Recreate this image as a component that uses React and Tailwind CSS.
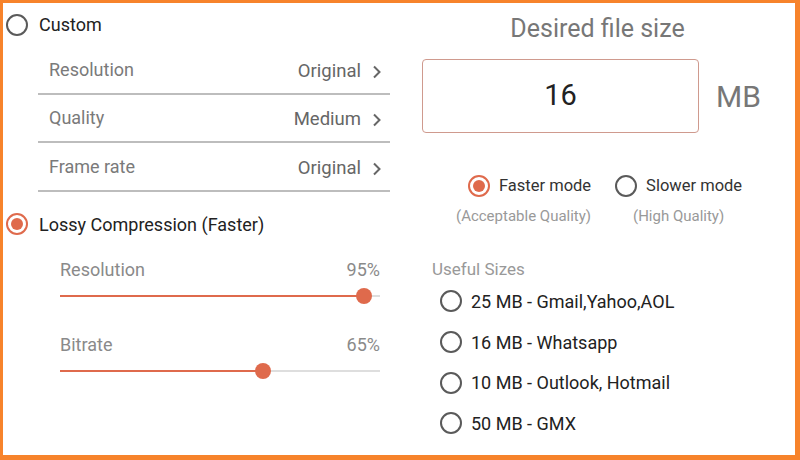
import { useState } from "react";

const Radio = ({ checked }) => (
  <span
    className={`w-[22px] h-[22px] rounded-full flex items-center justify-center shrink-0 border-2 ${
      checked ? "border-[#df6a4c]" : "border-[#5a5a5a]"
    }`}
  >
    {checked && <span className="w-[12px] h-[12px] rounded-full bg-[#df6a4c]" />}
  </span>
);

const Chevron = () => (
  <svg width="10" height="16" viewBox="0 0 10 16" className="ml-[11px]">
    <path d="M2 2.5 L7.5 8 L2 13.5" fill="none" stroke="#666" strokeWidth="2" />
  </svg>
);

const Slider = ({ label, value, pos }) => (
  <div className="h-[75px] pt-[5px]">
    <div className="flex justify-between text-[18px] text-[#8a8a8a] leading-[20px]">
      <span>{label}</span>
      <span>{value}%</span>
    </div>
    <div className="relative h-[2px] mt-[15px] bg-[#dedede]">
      <div className="absolute left-0 top-0 h-[2px] bg-[#df6a4c]" style={{ width: `${pos}%` }} />
      <div
        className="absolute top-[-7px] w-[16px] h-[16px] rounded-full bg-[#df6a4c]"
        style={{ left: `calc(${pos}% - 8px)` }}
      />
    </div>
  </div>
);

export default function App() {
  const [mode, setMode] = useState("faster");
  const rows = [
    { label: "Resolution", value: "Original" },
    { label: "Quality", value: "Medium" },
    { label: "Frame rate", value: "Original" },
  ];
  const sizes = [
    "25 MB - Gmail,Yahoo,AOL",
    "16 MB - Whatsapp",
    "10 MB - Outlook, Hotmail",
    "50 MB - GMX",
  ];

  return (
    <div
      className="w-[800px] h-[460px] bg-white border-[#f7832b] border-t-[3px] border-l-[3px] border-r-[5px] border-b-[5px] flex overflow-hidden"
      style={{ fontFamily: "Roboto, 'Noto Sans', sans-serif" }}
    >
      {/* LEFT */}
      <div className="w-[397px] shrink-0">
        <div className="h-[43px] flex items-center pl-[3px] gap-[11px]">
          <Radio checked={false} />
          <span className="text-[18px] text-[#222]">Custom</span>
        </div>

        <div className="ml-[35px] mr-[10px]">
          {rows.map((r) => (
            <div
              key={r.label}
              className="h-[48.5px] flex items-center justify-between pl-[11px] pr-[8px] border-b-2 border-[#bdbdbd]"
            >
              <span className="text-[18px] text-[#7a7a7a]">{r.label}</span>
              <span className="flex items-center text-[18.5px] text-[#666] mt-[5px]">
                {r.value}
                <Chevron />
              </span>
            </div>
          ))}
        </div>

        <div className="h-[63px] flex items-center pl-[3px] gap-[11px] pt-[2px]">
          <Radio checked />
          <span className="text-[18px] text-[#222]">Lossy Compression (Faster)</span>
        </div>

        <div className="ml-[57px] mr-[20px]">
          <Slider label="Resolution" value={95} pos={95} />
          <Slider label="Bitrate" value={65} pos={63.5} />
        </div>
      </div>

      {/* RIGHT */}
      <div className="flex-1">
        <div className="text-center text-[25px] text-[#777] leading-[30px] mt-[11px]">Desired file size</div>

        <div className="flex items-center mt-[15px] ml-[22px]">
          <div className="w-[277px] h-[74px] border border-[#cf9a8e] rounded-[4px] flex items-center justify-center text-[29px] text-[#222]">
            16
          </div>
          <span className="ml-[17px] text-[30px] text-[#777]">MB</span>
        </div>

        <div className="flex mt-[40px] ml-[56px]">
          <button className="flex flex-col items-center" onClick={() => setMode("faster")}>
            <span className="flex items-center gap-[9px] h-[26px] ml-[12px]">
              <Radio checked={mode === "faster"} />
              <span className="text-[16.5px] text-[#333]">Faster mode</span>
            </span>
            <span className="text-[15px] text-[#999] leading-[18px] mt-[8px]">(Acceptable Quality)</span>
          </button>
          <button className="flex flex-col items-center ml-[24px]" onClick={() => setMode("slower")}>
            <span className="flex items-center gap-[9px] h-[26px]">
              <Radio checked={mode === "slower"} />
              <span className="text-[16.5px] text-[#333]">Slower mode</span>
            </span>
            <span className="text-[15px] text-[#999] leading-[18px] mt-[8px]">(High Quality)</span>
          </button>
        </div>

        <div className="ml-[32px] mt-[34px] text-[17px] text-[#999] leading-[20px]">Useful Sizes</div>
        <div className="ml-[40px] mt-[2px]">
          {sizes.map((s) => (
            <div key={s} className="h-[40.7px] flex items-center gap-[9px]">
              <Radio checked={false} />
              <span className="text-[18px] text-[#222]">{s}</span>
            </div>
          ))}
        </div>
      </div>
    </div>
  );
}
